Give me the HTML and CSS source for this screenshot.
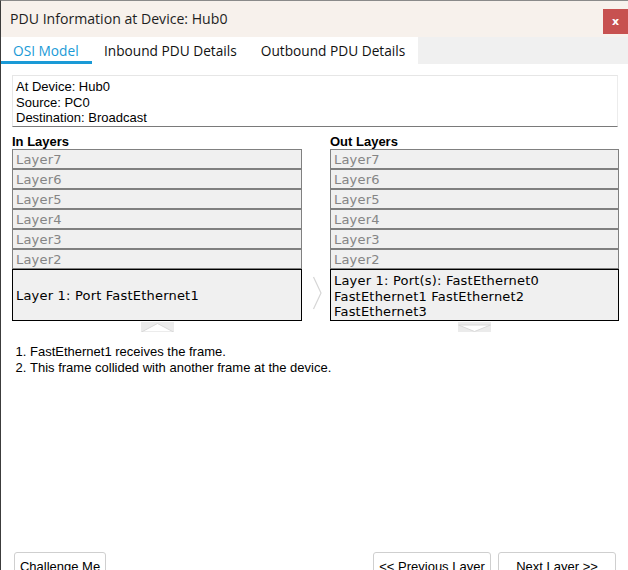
FILE: index.html
```html
<!DOCTYPE html>
<html>
<head>
<meta charset="utf-8">
<link rel="stylesheet" href="styles.css">
</head>
<body>
<div class="window">
  <div class="titlebar">
    <div class="title">PDU Information at Device: Hub0</div>
    <div class="close">x</div>
  </div>
  <div class="tabbar">
    <div class="tablist">
      <div class="tab active">OSI Model</div>
      <div class="tab">Inbound PDU Details</div>
      <div class="tab">Outbound PDU Details</div>
    </div>
  </div>
  <div class="content">
    <div class="info">
      <div>At Device: Hub0</div>
      <div>Source: PC0</div>
      <div>Destination: Broadcast</div>
    </div>
    <div class="columns">
      <div class="col">
        <div class="heading">In Layers</div>
        <div class="layer">Layer7</div>
        <div class="layer">Layer6</div>
        <div class="layer">Layer5</div>
        <div class="layer">Layer4</div>
        <div class="layer">Layer3</div>
        <div class="layer">Layer2</div>
        <div class="layer l1 center">Layer 1: Port FastEthernet1</div>
        <div class="vert">
          <svg width="33" height="10" viewBox="0 0 33 10"><rect x="0" y="0" width="33" height="10" fill="#ebebeb"/><path d="M0.5 10 L16.5 1.5 L32.5 10 Z" fill="#ffffff" stroke="#d8d8d8" stroke-width="1"/></svg>
        </div>
      </div>
      <div class="mid">
        <svg width="10" height="34" viewBox="0 0 10 34"><path d="M1.5 1 L9 17 L1.5 33" fill="none" stroke="#d6d6d6" stroke-width="1.2"/></svg>
      </div>
      <div class="col">
        <div class="heading">Out Layers</div>
        <div class="layer">Layer7</div>
        <div class="layer">Layer6</div>
        <div class="layer">Layer5</div>
        <div class="layer">Layer4</div>
        <div class="layer">Layer3</div>
        <div class="layer">Layer2</div>
        <div class="layer l1">Layer 1: Port(s): FastEthernet0<br>FastEthernet1 FastEthernet2<br>FastEthernet3</div>
        <div class="vert">
          <svg width="33" height="10" viewBox="0 0 33 10"><rect x="0" y="0" width="33" height="10" fill="#ebebeb"/><path d="M0.5 3 L16.5 9.5 L32.5 3 Z" fill="#ffffff" stroke="#d8d8d8" stroke-width="1"/></svg>
        </div>
      </div>
    </div>
    <ol class="notes">
      <li>FastEthernet1 receives the frame.</li>
      <li>This frame collided with another frame at the device.</li>
    </ol>
  </div>
  <div class="footer">
    <button class="btn challenge">Challenge Me</button>
    <div class="spacer"></div>
    <button class="btn nav">&lt;&lt; Previous Layer</button>
    <button class="btn nav">Next Layer &gt;&gt;</button>
  </div>
</div>
</body>
</html>
```

FILE: styles.css
```css
* { box-sizing: border-box; }
html, body { margin: 0; padding: 0; background: #ffffff; overflow: hidden; }
.window {
  width: 628px;
  height: 570px;
  display: flex;
  flex-direction: column;
  border-left: 1px solid #3c3c3c;
  border-top: 1px solid #8a8a8a;
  background: #ffffff;
  font-family: "Liberation Sans", Arial, sans-serif;
  font-size: 13px;
  color: #000;
}
.titlebar {
  height: 36px;
  background: #f7f1ec;
  display: flex;
  align-items: flex-start;
}
.title {
  font-family: "Open Sans", "Noto Sans", sans-serif;
  font-size: 14.1px;
  color: #1e1e1e;
  padding-left: 9px;
  padding-top: 8px;
}
.close {
  margin-left: auto;
  margin-top: 8px;
  width: 25px;
  height: 25px;
  background: #c75150;
  color: #ffffff;
  font-family: "DejaVu Sans", sans-serif;
  font-weight: bold;
  font-size: 11px;
  display: flex;
  align-items: center;
  justify-content: center;
}
.tabbar {
  height: 27px;
  background: #f0f0f0;
  display: flex;
}
.tablist {
  width: 417px;
  background: #ffffff;
  display: flex;
}
.tab {
  font-family: "Open Sans", "Noto Sans", sans-serif;
  font-size: 13.7px;
  color: #111;
  padding: 4px 12px 0 12px;
  height: 27px;
}
.tab.active {
  color: #1a9ad6;
  border-bottom: 3px solid #1a9ad6;
  width: 91px;
}
.content {
  padding: 11px 10px 0 11px;
}
.info {
  border-top: 1px solid #e6e6e6;
  border-left: 1px solid #e6e6e6;
  border-right: 1px solid #ececec;
  border-bottom: 1px solid #7a7a7a;
  height: 52px;
  padding: 3px 3px 0 3px;
  line-height: 15.5px;
  font-size: 13px;
}
.columns {
  display: grid;
  grid-template-columns: 290px 28px 289px;
}
.col { display: flex; flex-direction: column; }
.heading {
  font-weight: bold;
  font-size: 13px;
  margin-top: 7px;
  height: 15px;
  line-height: 16px;
}
.layer {
  height: 20px;
  border: 1px solid #808080;
  background: #f0f0f0;
  font-family: "DejaVu Sans", Verdana, sans-serif;
  font-size: 13px;
  letter-spacing: 0.2px;
  color: #858585;
  padding: 1px 0 0 3px;
  line-height: 17px;
}
.layer.l1 {
  height: 52px;
  border-color: #000;
  color: #000;
  padding: 3px 0 0 3px;
  line-height: 15.5px;
}
.layer.center {
  display: flex;
  align-items: center;
  padding-top: 2px;
}
.vert {
  display: flex;
  justify-content: center;
  height: 11px;
  padding-top: 1px;
}
.vert svg { display: block; }
.mid {
  align-self: end;
  padding-left: 10px;
  margin-bottom: 22px;
}
.mid svg { display: block; }
.notes {
  margin: 12px 0 0 0;
  padding: 0 0 0 18px;
  font-size: 13px;
  line-height: 16px;
}
.footer {
  margin-top: auto;
  display: flex;
  gap: 7px;
  padding: 0 12px 0 13px;
  height: 18px;
}
.spacer { flex: 1; }
.btn {
  font-family: "Liberation Sans", Arial, sans-serif;
  font-size: 13px;
  height: 26px;
  background: #ffffff;
  border: 1px solid #cfcfcf;
  border-radius: 3px;
  padding: 3px 0 0 0;
  color: #000;
  align-self: flex-start;
  text-align: center;
  vertical-align: top;
}
.btn.challenge { width: 92px; }
.btn.nav { width: 118px; }
```
